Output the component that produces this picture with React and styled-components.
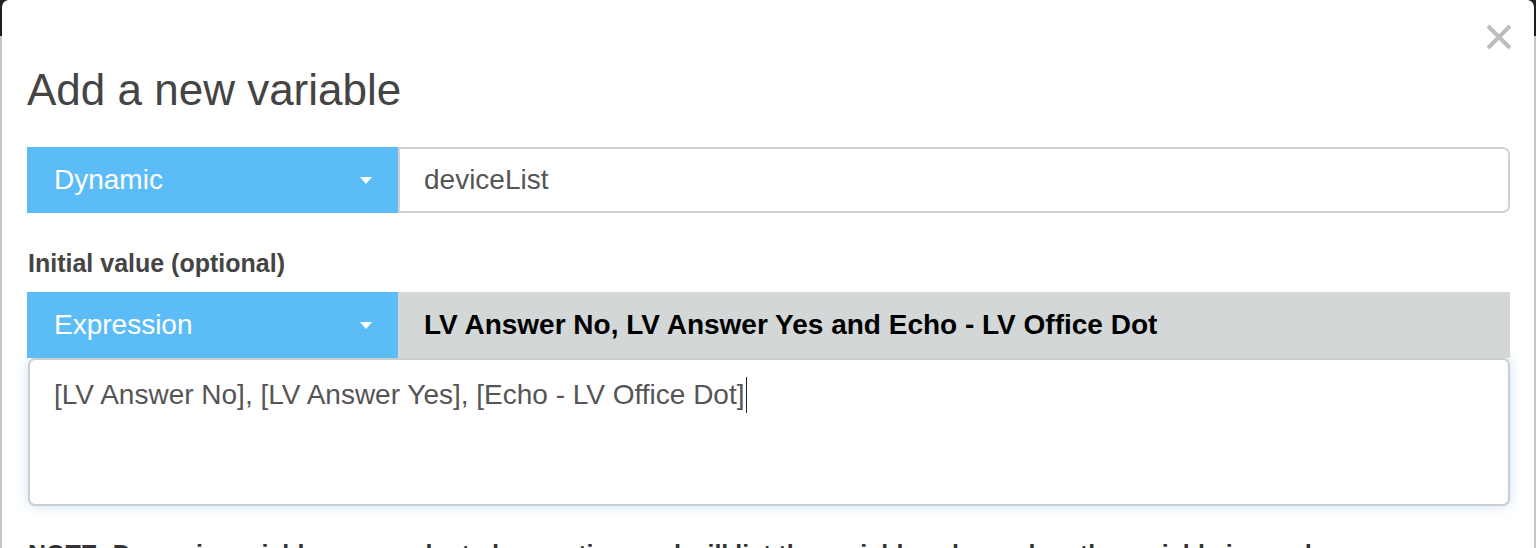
import React from 'react'
import styled, { createGlobalStyle } from 'styled-components';

const GlobalStyle = createGlobalStyle`
    html, body {
        margin: 0;
        padding: 0;
        height: 548px;
        overflow: hidden;
        background: linear-gradient(to bottom, #1f1f1f 0 36px, #c8c6c0 36px);
        font-family: "Liberation Sans", Arial, sans-serif;
    }
`

const Modal = styled.div`
    position: relative;
    margin: 0 2px;
    height: 600px;
    box-sizing: border-box;
    background: #fff;
    border-radius: 7px 7px 0 0;
    padding: 66px 24px 0 25px;
`

const CloseButton = styled.button`
    position: absolute;
    top: 23px;
    right: 21px;
    width: 28px;
    height: 28px;
    padding: 0;
    border: none;
    background: transparent;
    cursor: pointer;
`

const Title = styled.h4`
    margin: 0 0 33px;
    font-size: 44px;
    line-height: 48px;
    font-weight: normal;
    color: #444;
`

const Row = styled.div`
    display: flex;
    height: 66px;
`

const Select = styled.div`
    flex: 0 0 371px;
    display: flex;
    align-items: center;
    justify-content: space-between;
    box-sizing: border-box;
    padding: 0 26px 0 27px;
    background: #5bbcf8;
    color: #fff;
    font-size: 28px;
`

const Caret = styled.span`
    width: 0;
    height: 0;
    border-left: 6px solid transparent;
    border-right: 6px solid transparent;
    border-top: 7px solid #fff;
`

const Input = styled.div`
    flex: 1;
    display: flex;
    align-items: center;
    box-sizing: border-box;
    padding: 0 24px;
    border: 2px solid #d2d2d2;
    border-radius: 0 7px 7px 0;
    font-size: 28px;
    color: #555;
`

const Summary = styled.div`
    flex: 1;
    display: flex;
    align-items: center;
    padding: 0 26px;
    background: #d4d7d8;
    font-size: 28px;
    font-weight: bold;
    color: #000;
`

const Label = styled.label`
    display: block;
    margin: 35px 0 14px 1px;
    font-size: 25px;
    line-height: 30px;
    font-weight: bold;
    color: #444;
`

const TextArea = styled.div`
    height: 148px;
    box-sizing: border-box;
    margin: 0 0 0 1px;
    padding: 17px 24px 13px;
    border: 2px solid #cdcdcd;
    border-radius: 7px;
    box-shadow: 0 0 12px rgba(102, 175, 233, 0.35);
    font-size: 28px;
    line-height: 36px;
    color: #555;
`

const Cursor = styled.span`
    display: inline-block;
    width: 1px;
    height: 36px;
    margin-left: 2px;
    vertical-align: top;
    background: #222;
`

const Note = styled.p`
    margin: 33px 0 0 1px;
    font-size: 25px;
    line-height: 30px;
    font-weight: bold;
    color: #333;
    white-space: nowrap;
`

export default function App() {
    return (
        <>
            <GlobalStyle />
            <Modal>
                <CloseButton aria-label="Close">
                    <svg width="28" height="28" viewBox="0 0 28 28">
                        <path d="M3 3 L25 25 M25 3 L3 25" stroke="#bdbdbd" strokeWidth="4" />
                    </svg>
                </CloseButton>
                <Title>Add a new variable</Title>
                <Row>
                    <Select>Dynamic<Caret /></Select>
                    <Input>deviceList</Input>
                </Row>
                <Label>Initial value (optional)</Label>
                <Row>
                    <Select>Expression<Caret /></Select>
                    <Summary>LV Answer No, LV Answer Yes and Echo - LV Office Dot</Summary>
                </Row>
                <TextArea>
                    [LV Answer No], [LV Answer Yes], [Echo - LV Office Dot]<Cursor />
                </TextArea>
                <Note>NOTE: Dynamic variables are evaluated every time and will list the variable values when the variable is used</Note>
            </Modal>
        </>
    )
}
